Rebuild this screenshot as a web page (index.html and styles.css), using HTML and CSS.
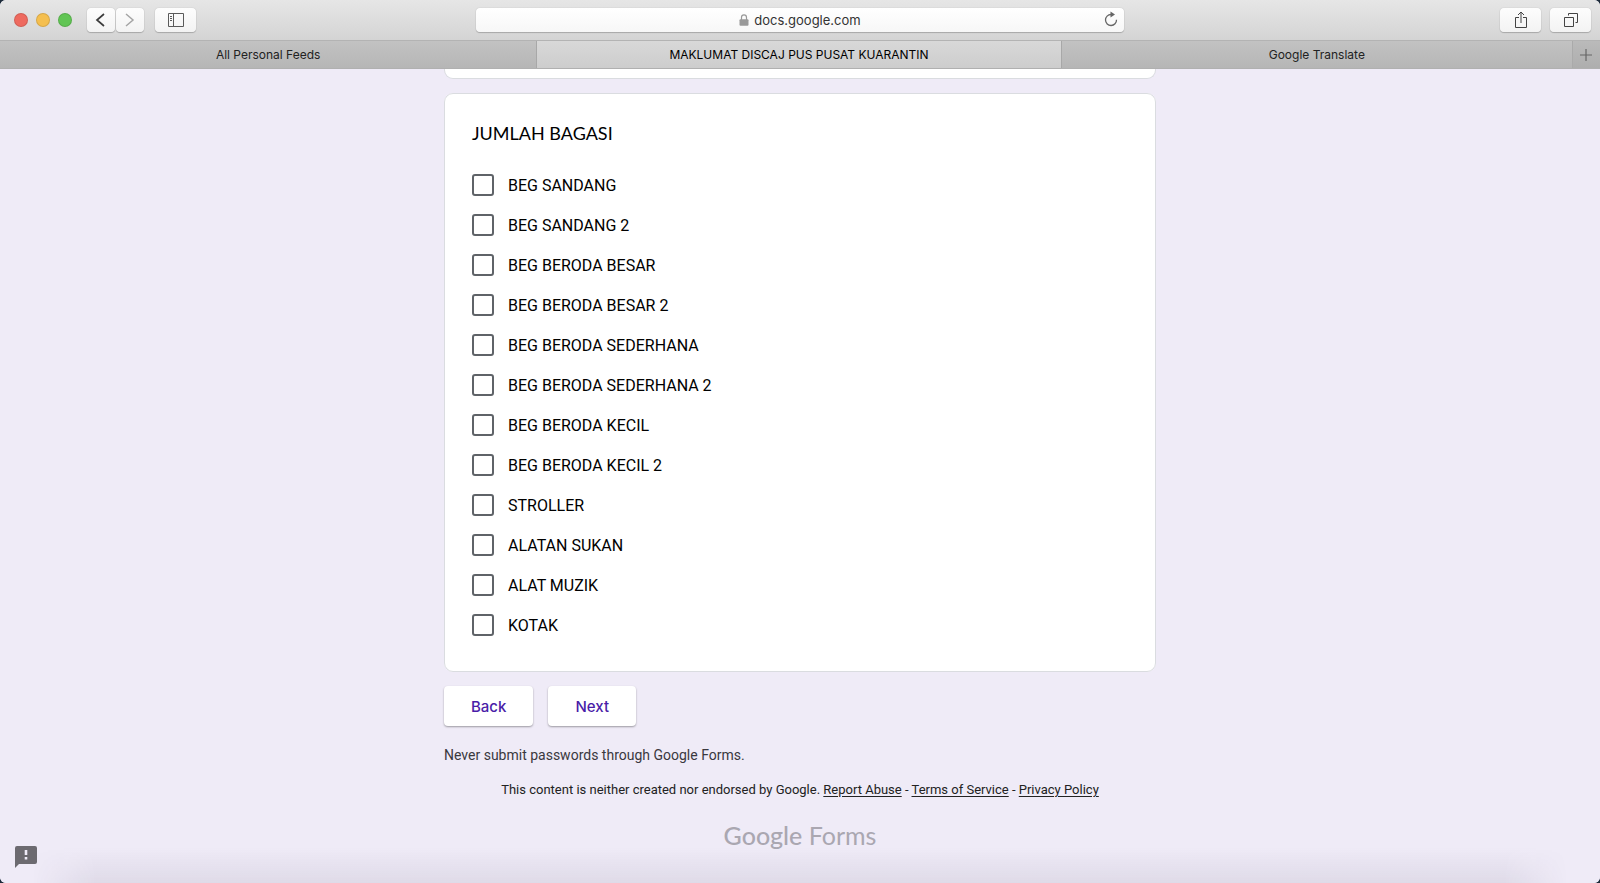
FILE: index.html
```html
<!DOCTYPE html>
<html lang="ms">
<head>
<meta charset="UTF-8">
<meta name="viewport" content="width=device-width,initial-scale=1.0">
<title>MAKLUMAT DISCAJ PUS PUSAT KUARANTIN</title>
<link rel="stylesheet" href="styles.css">
</head>
<body>
<div class="window">
<header class="toolbar">
<div class="tools">
<div class="lights"><span class="light red"></span><span class="light yellow"></span><span class="light green"></span></div>
<div class="history">
<button class="tool nav" type="button" aria-label="Back"><svg width="28" height="24" viewBox="0 0 28 24"><path d="M17 6l-7 6 7 6" fill="none" stroke="#3c3c3c" stroke-width="1.7"/></svg></button>
<button class="tool nav" type="button" aria-label="Forward"><svg width="28" height="24" viewBox="0 0 28 24"><path d="M10 6l7 6-7 6" fill="none" stroke="#a5a5a5" stroke-width="1.5"/></svg></button>
</div>
<button class="tool" type="button" aria-label="Sidebar"><svg width="18" height="14" viewBox="0 0 18 14" fill="none" stroke="#5a5a5a"><path d="M1.5.5h15v13h-15zM6.500.5v13M3 3.500h2M3 5.500h2M3 7.500h2"/></svg></button>
</div>
<div class="address">
<svg class="lock" width="10" height="12" viewBox="0 0 10 12"><path d="M2.500 6V3.500a2.500 2.700 0 0 1 5 0V6" fill="none" stroke="#999" stroke-width="1.200"/><rect x=".5" y="5.200" width="9" height="6.500" rx="1" fill="#999"/></svg>
<span>docs.google.com</span>
<button class="reload" type="button" aria-label="Reload"><svg width="14" height="16" viewBox="0 0 14 16"><path d="M7 3.500a5.500 5.500 0 1 0 5.500 5.300" fill="none" stroke="#666" stroke-width="1.300"/><path d="M6.500.5v6l4.500-3z" fill="#666"/></svg></button>
</div>
<div class="tools end">
<button class="tool" type="button" aria-label="Share"><svg width="14" height="18" viewBox="0 0 14 18" fill="none" stroke="#444"><path d="M5 6.500H1.500v10h11v-10H9M7 12V1M4 4l3-3 3 3"/></svg></button>
<button class="tool" type="button" aria-label="Show all tabs"><svg width="14" height="14" viewBox="0 0 14 14" fill="none" stroke="#444"><path d="M.5 4.500h9v9h-9zM4.500 2.500v-2h9v9h-2"/></svg></button>
</div>
</header>
<nav class="tabs">
<a class="tab first" href="#">All Personal Feeds</a>
<a class="tab active" href="#">MAKLUMAT DISCAJ PUS PUSAT KUARANTIN</a>
<a class="tab last" href="#">Google Translate</a>
<button class="add" type="button" aria-label="New tab"><svg width="12" height="12" viewBox="0 0 12 12"><path d="M6 0v12M0 6h12" stroke="#666" stroke-width="1.200"/></svg></button>
</nav>
<main class="page">
<form class="form" onsubmit="return false">
<div class="card previous"></div>
<fieldset class="card">
<legend class="question">JUMLAH BAGASI</legend>
<div class="options">
<label class="option"><input type="checkbox">BEG SANDANG</label>
<label class="option"><input type="checkbox">BEG SANDANG 2</label>
<label class="option"><input type="checkbox">BEG BERODA BESAR</label>
<label class="option"><input type="checkbox">BEG BERODA BESAR 2</label>
<label class="option"><input type="checkbox">BEG BERODA SEDERHANA</label>
<label class="option"><input type="checkbox">BEG BERODA SEDERHANA 2</label>
<label class="option"><input type="checkbox">BEG BERODA KECIL</label>
<label class="option"><input type="checkbox">BEG BERODA KECIL 2</label>
<label class="option"><input type="checkbox">STROLLER</label>
<label class="option"><input type="checkbox">ALATAN SUKAN</label>
<label class="option"><input type="checkbox">ALAT MUZIK</label>
<label class="option"><input type="checkbox">KOTAK</label>
</div>
</fieldset>
<div class="actions">
<button class="btn" type="button">Back</button>
<button class="btn" type="submit">Next</button>
</div>
<p class="warning">Never submit passwords through Google Forms.</p>
<p class="legal">This content is neither created nor endorsed by Google. <a href="#">Report Abuse</a> - <a href="#">Terms of Service</a> - <a href="#">Privacy Policy</a></p>
<div class="brand"><b>Google</b> Forms</div>
</form>
<button class="report" type="button" aria-label="Report a problem"><svg width="22" height="22" viewBox="0 0 22 22"><path d="M2 0h18a2 2 0 0 1 2 2v14a2 2 0 0 1-2 2H4l-4 4V2a2 2 0 0 1 2-2z" fill="#6c6a70"/><path d="M9.700 4h2.600v5H9.700zM9.700 11h2.600v2.600H9.700z" fill="#efebf7"/></svg></button>
</main>
</div>
</body>
</html>
```

FILE: styles.css
```css
*,*::before,*::after{margin:0;padding:0;box-sizing:border-box}
:root{--page:#efebf7;--line:#dadce0;--purple:#4a1da8}
body{background:#1d2b3a;font-family:Roboto,"Liberation Sans",sans-serif;color:#000}
button{font:inherit;border:none;background:none}
svg{display:block}
.window{min-height:100vh;display:flex;flex-direction:column;border-radius:6px;overflow:hidden;background:var(--page)}

.toolbar{height:40px;display:grid;grid-template-columns:1fr 648px 1fr;align-items:center;padding:0 9px;background:linear-gradient(#e6e6e6,#d4d4d4)}
.tools{display:flex;align-items:center;gap:11px}
.tools.end{justify-content:flex-end;gap:9px}
.lights{display:flex;gap:8px;margin:0 4px 0 5px}
.light{width:14px;height:14px;border-radius:50%;border:1px solid rgba(0,0,0,.12)}
.red{background:#ee6a5f}
.yellow{background:#f5bf4f}
.green{background:#61c554}
.history{display:flex;gap:1px}
.tool{width:41px;height:24px;display:flex;align-items:center;justify-content:center;border-radius:4px;background:linear-gradient(#fdfdfd,#f3f3f3);box-shadow:0 0 1px rgba(0,0,0,.3),0 1px 1px rgba(0,0,0,.2)}
.nav{width:28px}
.address{height:24px;display:flex;align-items:center;justify-content:center;gap:5px;position:relative;border-radius:4px;background:linear-gradient(#fff,#f7f7f7);box-shadow:0 0 1px rgba(0,0,0,.3),0 1px 1px rgba(0,0,0,.2);font:13px Inter,sans-serif;color:#333}
.reload{position:absolute;right:6px;top:3px}

.tabs{height:29px;display:flex;background:linear-gradient(#c2c2c2,#b6b6b6);border-top:1px solid #b3b3b3;border-bottom:1px solid #b0b0b0;font:12px Inter,sans-serif}
.tab{display:flex;align-items:center;justify-content:center;color:#222;text-decoration:none}
.first{flex:537 0 0}
.active{flex:524 0 0;background:linear-gradient(#d8d8d8,#cdcdcd);border-left:1px solid #a8a8a8;border-right:1px solid #a8a8a8;color:#000}
.last{flex:511 0 0}
.add{width:28px;display:flex;align-items:center;justify-content:center;background:rgba(0,0,0,.04);border-left:1px solid #aaa}

.page{flex:1;position:relative;background:var(--page)}
.page::after{content:"";position:absolute;left:0;right:0;bottom:0;height:36px;background:linear-gradient(transparent,rgba(40,30,60,.08));-webkit-mask-image:linear-gradient(90deg,transparent 2%,#000 6%,#000 94%,transparent 98%);mask-image:linear-gradient(90deg,transparent 2%,#000 6%,#000 94%,transparent 98%);pointer-events:none}
.form{max-width:712px;margin:0 auto}
.card{background:#fff;border:1px solid var(--line);border-radius:9px;padding:26px 27px;margin:0 0 14px}
.previous{height:10px;padding:0;border-top:none;border-radius:0 0 9px 9px}
.question{float:left;width:100%;font:18px/27px Lato,sans-serif;margin-bottom:18px}
.options{clear:both}
.option{display:flex;align-items:center;gap:14px;height:40px;font-size:16px}
.option input{appearance:none;width:22px;height:22px;border:2px solid #5f6368;border-radius:3px}
.option input:checked{background:var(--purple);border-color:var(--purple)}
.actions{display:flex;gap:15px}
.btn{height:40px;padding:0 27px;border-radius:4px;background:#fff;color:var(--purple);font:500 15px Inter,sans-serif;box-shadow:0 1px 2px rgba(0,0,0,.35)}
.warning{margin-top:20px;font-size:14px;line-height:18px;color:#3a383e}
.legal{margin-top:17px;font-size:13px;line-height:18px;text-align:center;color:#222}
.legal a{color:inherit;text-underline-offset:2px}
.brand{margin-top:19px;font:25px/34px Lato,sans-serif;text-align:center;color:#aaa7b1}
.brand b{font-weight:500}
.report{position:absolute;left:15px;bottom:15px}
@media(max-width:1000px){.toolbar{grid-template-columns:auto 1fr auto;gap:12px}}
@media(max-width:720px){.form{padding:0 12px}}
```
